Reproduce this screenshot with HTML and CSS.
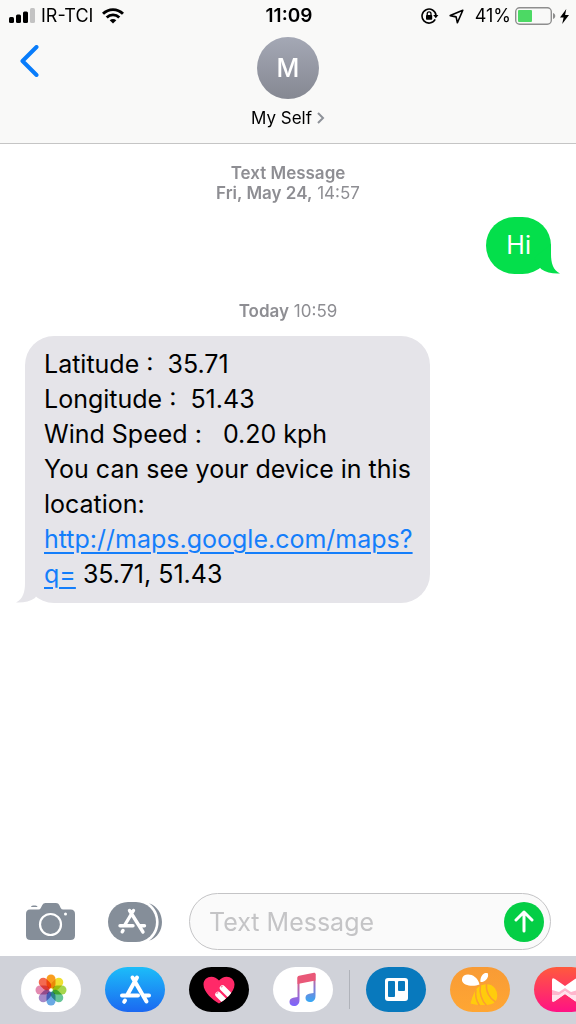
FILE: index.html
```html
<!DOCTYPE html>
<html lang="en">
<head>
<meta charset="utf-8">
<meta name="viewport" content="width=device-width, initial-scale=1">
<title>My Self</title>
<link rel="stylesheet" href="styles.css">
</head>
<body>
<div class="phone">
  <header class="header">
    <div class="status">
      <div class="status-side">
        <svg width="26" height="16" viewBox="0 0 26 16" aria-hidden="true"><rect x="0" y="9" width="5" height="6" rx="1.5"/><rect x="7" y="6.500" width="5" height="8.500" rx="1.5"/><rect x="14" y="3.500" width="5" height="11.500" rx="1.5"/><rect x="21" y="0" width="5" height="15" rx="1.5" fill="#c3c3c3"/></svg>
        <span class="carrier">IR-TCI</span>
        <svg class="wifi" width="22" height="16" viewBox="0 0 22 16" fill="none" stroke="#000" stroke-width="2.900" aria-hidden="true"><path d="M1 5.800C6.700.2 15.300.2 21 5.800"/><path d="M4.700 9.500c3.600-3.500 9-3.500 12.600 0"/><path d="M11 15.500L7.700 12.200c1.900-1.700 4.700-1.700 6.600 0z" fill="#000" stroke="none"/></svg>
      </div>
      <time class="clock">11:09</time>
      <div class="status-side status-end">
        <svg class="lock" width="18" height="16" viewBox="0 0 18 16" fill="none" stroke="#000" stroke-width="1.600" aria-hidden="true"><path d="M14.200 11.400A7 7 0 1 1 15 7.400"/><path d="M12.200 7h5.200l-2.600 3.300z" fill="#000" stroke="none"/><rect x="5" y="7" width="6.200" height="4.800" rx=".8" fill="#000" stroke="none"/><path d="M6.200 7.500V5.700a1.900 1.900 0 0 1 3.800 0v1.800" stroke-width="1.300"/></svg>
        <svg class="arrow" width="15" height="15" viewBox="0 0 15 15" fill="none" stroke="#000" stroke-width="1.600" stroke-linejoin="round" aria-hidden="true"><path d="M13.800 1.200L1.200 6.600l5.900 1.300 1.300 5.900z"/></svg>
        <span>41%</span>
        <svg width="41" height="18" viewBox="0 0 41 18" aria-hidden="true"><rect x=".7" y=".7" width="35.600" height="16.600" rx="4" fill="none" stroke="#8e8e8e" stroke-width="1.400"/><rect x="3" y="3" width="14" height="12" rx="1" fill="#4cd964"/><path d="M38 6c3 1 3 5 0 6z" fill="#8e8e8e"/></svg>
        <svg class="bolt" width="9" height="15" viewBox="0 0 9 15" aria-hidden="true"><path d="M6.300 0L0 8.500h3.600L2.200 15 9 6H5.100z"/></svg>
      </div>
    </div>
    <div class="nav">
      <button class="back" type="button" aria-label="Back"><svg width="20" height="32" viewBox="0 0 20 32" fill="none" stroke="#087cfb" stroke-width="4" stroke-linecap="round" stroke-linejoin="round" aria-hidden="true"><path d="M16.500 2L2.500 16l14 14"/></svg></button>
      <button class="contact" type="button">
        <span class="avatar">M</span>
        <span class="name">My Self <svg width="8" height="12" viewBox="0 0 8 12" fill="none" stroke="#8e9299" stroke-width="2" aria-hidden="true"><path d="M1 1l5 5-5 5"/></svg></span>
      </button>
    </div>
  </header>

  <main class="thread">
    <p class="stamp"><b>Text Message</b><br><b>Fri, May 24,</b> 14:57</p>
    <div class="bubble sent">Hi
      <svg class="tail" width="26" height="30" viewBox="0 0 26 30" aria-hidden="true"><path d="M17 0V10C17 19 19 26 26 29.500 19 30 12 28.500 7 25L0 14z" fill="#04df4b"/></svg>
    </div>
    <p class="stamp stamp-next"><b>Today</b> 10:59</p>
    <div class="bubble received">Latitude :&nbsp; 35.71<br>Longitude :&nbsp; 51.43<br>Wind Speed :&nbsp;&nbsp; 0.20 kph<br>You can see your device in this location:<br><a href="http://maps.google.com/maps?q=">http://maps.google.com/maps?<wbr>q=</a> 35.71, 51.43
      <svg class="tail" width="26" height="30" viewBox="0 0 26 30" aria-hidden="true"><path d="M9 0V10C9 19 7 26 0 29.500 7 30 14 28.500 19 25L26 14z" fill="#e5e4e9"/></svg>
    </div>
  </main>

  <form class="composer">
    <button type="button" aria-label="Camera"><svg width="49" height="38" viewBox="0 0 49 38" aria-hidden="true"><path d="M5 4Q5 2.500 7 2.500h2.500q2 0 2 1.500zM4 6.500h8.500q1.500 0 2.300-1.500l1.500-3Q17.200 0 19.500 0h10.500q2.500 0 3.300 2l1.400 3q.8 1.500 2.500 1.500H44.500q4.500 0 4.500 4.500v21.500q0 4.500-4.500 4.500H4.500q-4.500 0-4.500-4.500V11q0-4.500 4-4.500z" fill="#858e99"/><circle cx="24.500" cy="21.500" r="10.500" fill="none" stroke="#fff" stroke-width="2.200"/><circle cx="39.500" cy="11" r="1.500" fill="#fff"/></svg></button>
    <button class="apps" type="button" aria-label="Apps"><svg width="54" height="40" viewBox="0 0 54 40" aria-hidden="true"><path d="M20 0h8a20 20 0 0 1 0 40h-8a20 20 0 0 1 0-40z" fill="#858e99"/><path d="M41 1.200C58.300 7 58.300 33 41 38.800 53.800 30 53.800 10 41 1.200z" fill="#858e99"/><g stroke="#fff" stroke-width="3.400" stroke-linecap="round"><path d="M21.500 8.500l13.500 21.500M25.500 8.500l-9 15M12 23.700h13M31 23.700h5.500M15 28.500l-.8 1.300"/></g></svg></button>
    <div class="field">
      <input type="text" aria-label="Text Message" placeholder="Text Message">
      <button class="send" type="submit" aria-label="Send"><svg width="20" height="24" viewBox="0 0 20 24" fill="none" stroke="#fff" stroke-width="3" stroke-linecap="round" stroke-linejoin="round" aria-hidden="true"><path d="M10 21V2M2 10l8-8 8 8"/></svg></button>
    </div>
  </form>

  <nav class="dock" aria-label="Message apps">
    <div class="group">
      <button class="app white" type="button" aria-label="Photos"><svg width="32" height="32" viewBox="-16 -16 32 32" aria-hidden="true"><g class="petals"><rect x="-4.500" y="-15.500" width="9" height="14" rx="4.500" fill="#f99d1e"/><rect x="-4.500" y="-15.500" width="9" height="14" rx="4.500" fill="#efe032" transform="rotate(45)"/><rect x="-4.500" y="-15.500" width="9" height="14" rx="4.500" fill="#a5d64c" transform="rotate(90)"/><rect x="-4.500" y="-15.500" width="9" height="14" rx="4.500" fill="#66c598" transform="rotate(135)"/><rect x="-4.500" y="-15.500" width="9" height="14" rx="4.500" fill="#6aa9e4" transform="rotate(180)"/><rect x="-4.500" y="-15.500" width="9" height="14" rx="4.500" fill="#a589c8" transform="rotate(225)"/><rect x="-4.500" y="-15.500" width="9" height="14" rx="4.500" fill="#e389b0" transform="rotate(270)"/><rect x="-4.500" y="-15.500" width="9" height="14" rx="4.500" fill="#f46a50" transform="rotate(315)"/></g><circle r="1.500" fill="#fff"/></svg></button>
      <button class="app store" type="button" aria-label="App Store"><svg width="34" height="32" viewBox="0 0 34 32" stroke="#fff" stroke-width="4" stroke-linecap="round" aria-hidden="true"><path d="M14.500 3.500l14 24M19 3.500L9.500 20.500M4 21.500h16M25.500 21.500H31M7 26.500l-.8 1.300"/></svg></button>
      <button class="app black" type="button" aria-label="Digital Touch"><svg width="32" height="28" viewBox="0 0 32 28" aria-hidden="true"><defs><clipPath id="heart"><path d="M16 27.500C10 24 .5 16.500.5 8.500.5 0 11-2 16 4.500 21-2 31.500 0 31.500 8.500c0 8-9.500 15.500-15.500 19z"/></clipPath></defs><g clip-path="url(#heart)"><path d="M0 0h32v28H0z" fill="#ff2968"/><g stroke="#fff" stroke-width="5.500" stroke-linecap="round"><path d="M15 18.500l9 9M19.500 12l11 11"/></g><path d="M13.500 17.800l1.500-1.500M18 11.300l1.500-1.500" stroke="#f990ad" stroke-width="1.500"/></g></svg></button>
      <button class="app white" type="button" aria-label="Music"><svg width="28" height="36" viewBox="0 0 28 36" aria-hidden="true"><defs><linearGradient id="note-left" x1="0" y1="0" x2="0" y2="1"><stop stop-color="#f45869"/><stop offset=".55" stop-color="#a66ac5"/><stop offset="1" stop-color="#7b65ff"/></linearGradient><linearGradient id="note-right" x1="0" y1="0" x2="0" y2="1"><stop stop-color="#ef5572"/><stop offset=".5" stop-color="#877bd3"/><stop offset="1" stop-color="#35a9f5"/></linearGradient></defs><path d="M8.500 5.500L10.500 4v24c0 4-2.500 6-5.500 6-2.500 0-4.500-1.500-4.500-4 0-4 4-4.500 8-5z" fill="url(#note-left)"/><path d="M24.500 2h2v22c0 4-2.500 6-5.500 6-2.500 0-4.500-1.500-4.500-4 0-4 4-4.500 8-5z" fill="url(#note-right)"/><path d="M8.500 5.500Q8.500 4 10 3.700L25 .8Q26.500.6 26.500 2v6.500L8.500 12z" fill="#e95878"/></svg></button>
    </div>
    <span class="divider"></span>
    <div class="group">
      <button class="app trello" type="button" aria-label="Trello"><svg width="23" height="23" viewBox="0 0 23 23" aria-hidden="true"><rect width="23" height="23" rx="3" fill="#fff"/><rect x="3" y="3" width="7" height="16" rx="1" fill="#0879bd"/><rect x="13" y="3" width="7" height="10" rx="1" fill="#0879bd"/></svg></button>
      <button class="app orange" type="button" aria-label="Swarm"><svg width="36" height="34" viewBox="0 0 36 34" aria-hidden="true"><path d="M0 6C1-1 15 0 17.500 11.500 10 14.500-1 12 0 6z" fill="#fff"/><path d="M18.500 9C17.500 3 23-1.500 25.500 0 27.500 3 24.500 9 18.500 9z" fill="#fff"/><path d="M8.500 30.500Q10 24 13.500 17C17 12 24 10 29 12c7 4 8 13 3.500 17.500C28 33 17 32.500 8.500 30.500z" fill="#ffcc0c"/><g fill="none" stroke="#fc9f31" stroke-width="1.500"><path d="M14 16.500c-1 6 0 11 3.500 16"/><path d="M18.500 12.500c-1.500 7 1 15 6 20"/><path d="M24.500 10.500c-1 8 3 15 9 18.500"/></g></svg></button>
      <button class="app pink" type="button" aria-label="Video editor"><svg width="24" height="24" viewBox="0 0 24 24" aria-hidden="true"><path d="M0 2Q0-1 3 1l10 7L23 1q3-2 3 1v20q0 3-3 1l-10-7-10 7q-3 2-3-1z" fill="#fff"/><path d="M0 12l7 2 6-4 6 4 7-2v6l-6 0-7-5-7 5-6 0z" fill="#ffb6cd"/><path d="M0 17h7l6-4 6 4h7v5q0 3-3 1l-10-7-10 7q-3 2-3-1z" fill="#ffe3ec"/></svg></button>
    </div>
  </nav>
</div>
</body>
</html>
```
FILE: styles.css
```css
* { box-sizing: border-box; }

body {
  margin: 0;
  background: #fff;
  color: #000;
  font-family: Inter, "Liberation Sans", sans-serif;
}

button {
  display: flex;
  flex: none;
  padding: 0;
  border: 0;
  background: none;
  color: inherit;
  font: inherit;
}

svg { display: block; flex: none; }

.phone {
  display: flex;
  flex-direction: column;
  min-height: 100vh;
  overflow: hidden;
}

.header {
  background: #f9f9f8;
  border-bottom: 1px solid #c5c5c5;
}

.status {
  display: grid;
  grid-template-columns: 1fr auto 1fr;
  align-items: center;
  height: 32px;
  padding: 0 7px 0 9px;
  font-size: 18px;
  line-height: 24px;
}

.status-side { display: flex; align-items: center; }
.status-end { justify-content: flex-end; }
.carrier { margin-left: 6px; }
.wifi { margin-left: 9px; }
.clock { font-size: 19px; font-weight: 600; }
.lock { margin-right: 10px; }
.arrow { margin-right: 11px; }
.status-end span { margin-right: 4px; }
.bolt { margin-left: 4px; }

.nav {
  display: grid;
  grid-template-columns: 1fr auto 1fr;
  align-items: start;
  padding: 5px 20px 14px;
}

.back { margin-top: 8px; }

.contact {
  flex-direction: column;
  align-items: center;
  gap: 8px;
}

.avatar {
  display: grid;
  place-items: center;
  width: 62px;
  height: 62px;
  border-radius: 50%;
  background: linear-gradient(#a4a8b5, #858892);
  color: #fff;
  font-size: 25px;
  font-weight: 500;
}

.name {
  display: flex;
  align-items: center;
  gap: 5px;
  font-size: 17px;
  line-height: 22px;
}

.thread {
  display: flex;
  flex: 1;
  flex-direction: column;
  align-items: flex-start;
  padding: 19px 25px;
}

.stamp {
  align-self: center;
  margin: 0;
  color: #8e8e93;
  font-size: 17px;
  line-height: 20px;
  text-align: center;
}

.stamp b { font-weight: 600; }
.stamp-next { margin-top: 27px; }

.bubble {
  position: relative;
  padding: 11px 19px;
  border-radius: 29px;
  font-size: 25px;
  line-height: 35px;
}

.sent {
  align-self: flex-end;
  margin-top: 14px;
  padding: 11px 20px;
  background: #04df4b;
  color: #fff;
}

.received {
  max-width: 77%;
  margin-top: 15px;
  padding-right: 14px;
  background: #e5e4e9;
}

.received a {
  color: #147efb;
  text-decoration-thickness: 2px;
  text-underline-offset: 4px;
}

.tail { position: absolute; bottom: 0; }
.sent .tail { right: -9px; }
.received .tail { left: -9px; }

.composer {
  display: flex;
  align-items: center;
  padding: 0 25px 6px 26px;
}

.apps { margin: 0 27px 0 33px; }

.field {
  display: flex;
  flex: 1;
  align-items: center;
  min-width: 0;
  height: 57px;
  padding: 0 6px 0 19px;
  border: 1px solid #c4c4c6;
  border-radius: 29px;
  background: #fafafa;
}

.field input {
  flex: 1;
  width: 100%;
  min-width: 0;
  padding: 0;
  border: 0;
  outline: 0;
  background: none;
  color: #000;
  font: inherit;
  font-size: 25px;
}

.field input::placeholder { color: #c4c4c6; opacity: 1; }

.send {
  align-items: center;
  justify-content: center;
  width: 40px;
  height: 40px;
  border-radius: 50%;
  background: #04ce45;
}

.dock {
  display: flex;
  align-items: center;
  gap: 16px;
  padding: 11px 0 12px 21px;
  background: #d0d2d9;
}

.group { display: flex; gap: 24px; }

.divider {
  flex: none;
  width: 1px;
  height: 39px;
  background: #b0b3ba;
}

.app {
  align-items: center;
  justify-content: center;
  width: 60px;
  height: 45px;
  border-radius: 23px;
}

.white { background: #fff; }
.store { background: linear-gradient(#1cbdf9, #1b68f1); }
.black { background: #000; }
.trello { background: #0879bd; }
.orange { background: linear-gradient(#f89b35, #ffa633); }
.pink { background: linear-gradient(#ff5a3d, #ff1284); }
.petals rect { mix-blend-mode: multiply; }
```
